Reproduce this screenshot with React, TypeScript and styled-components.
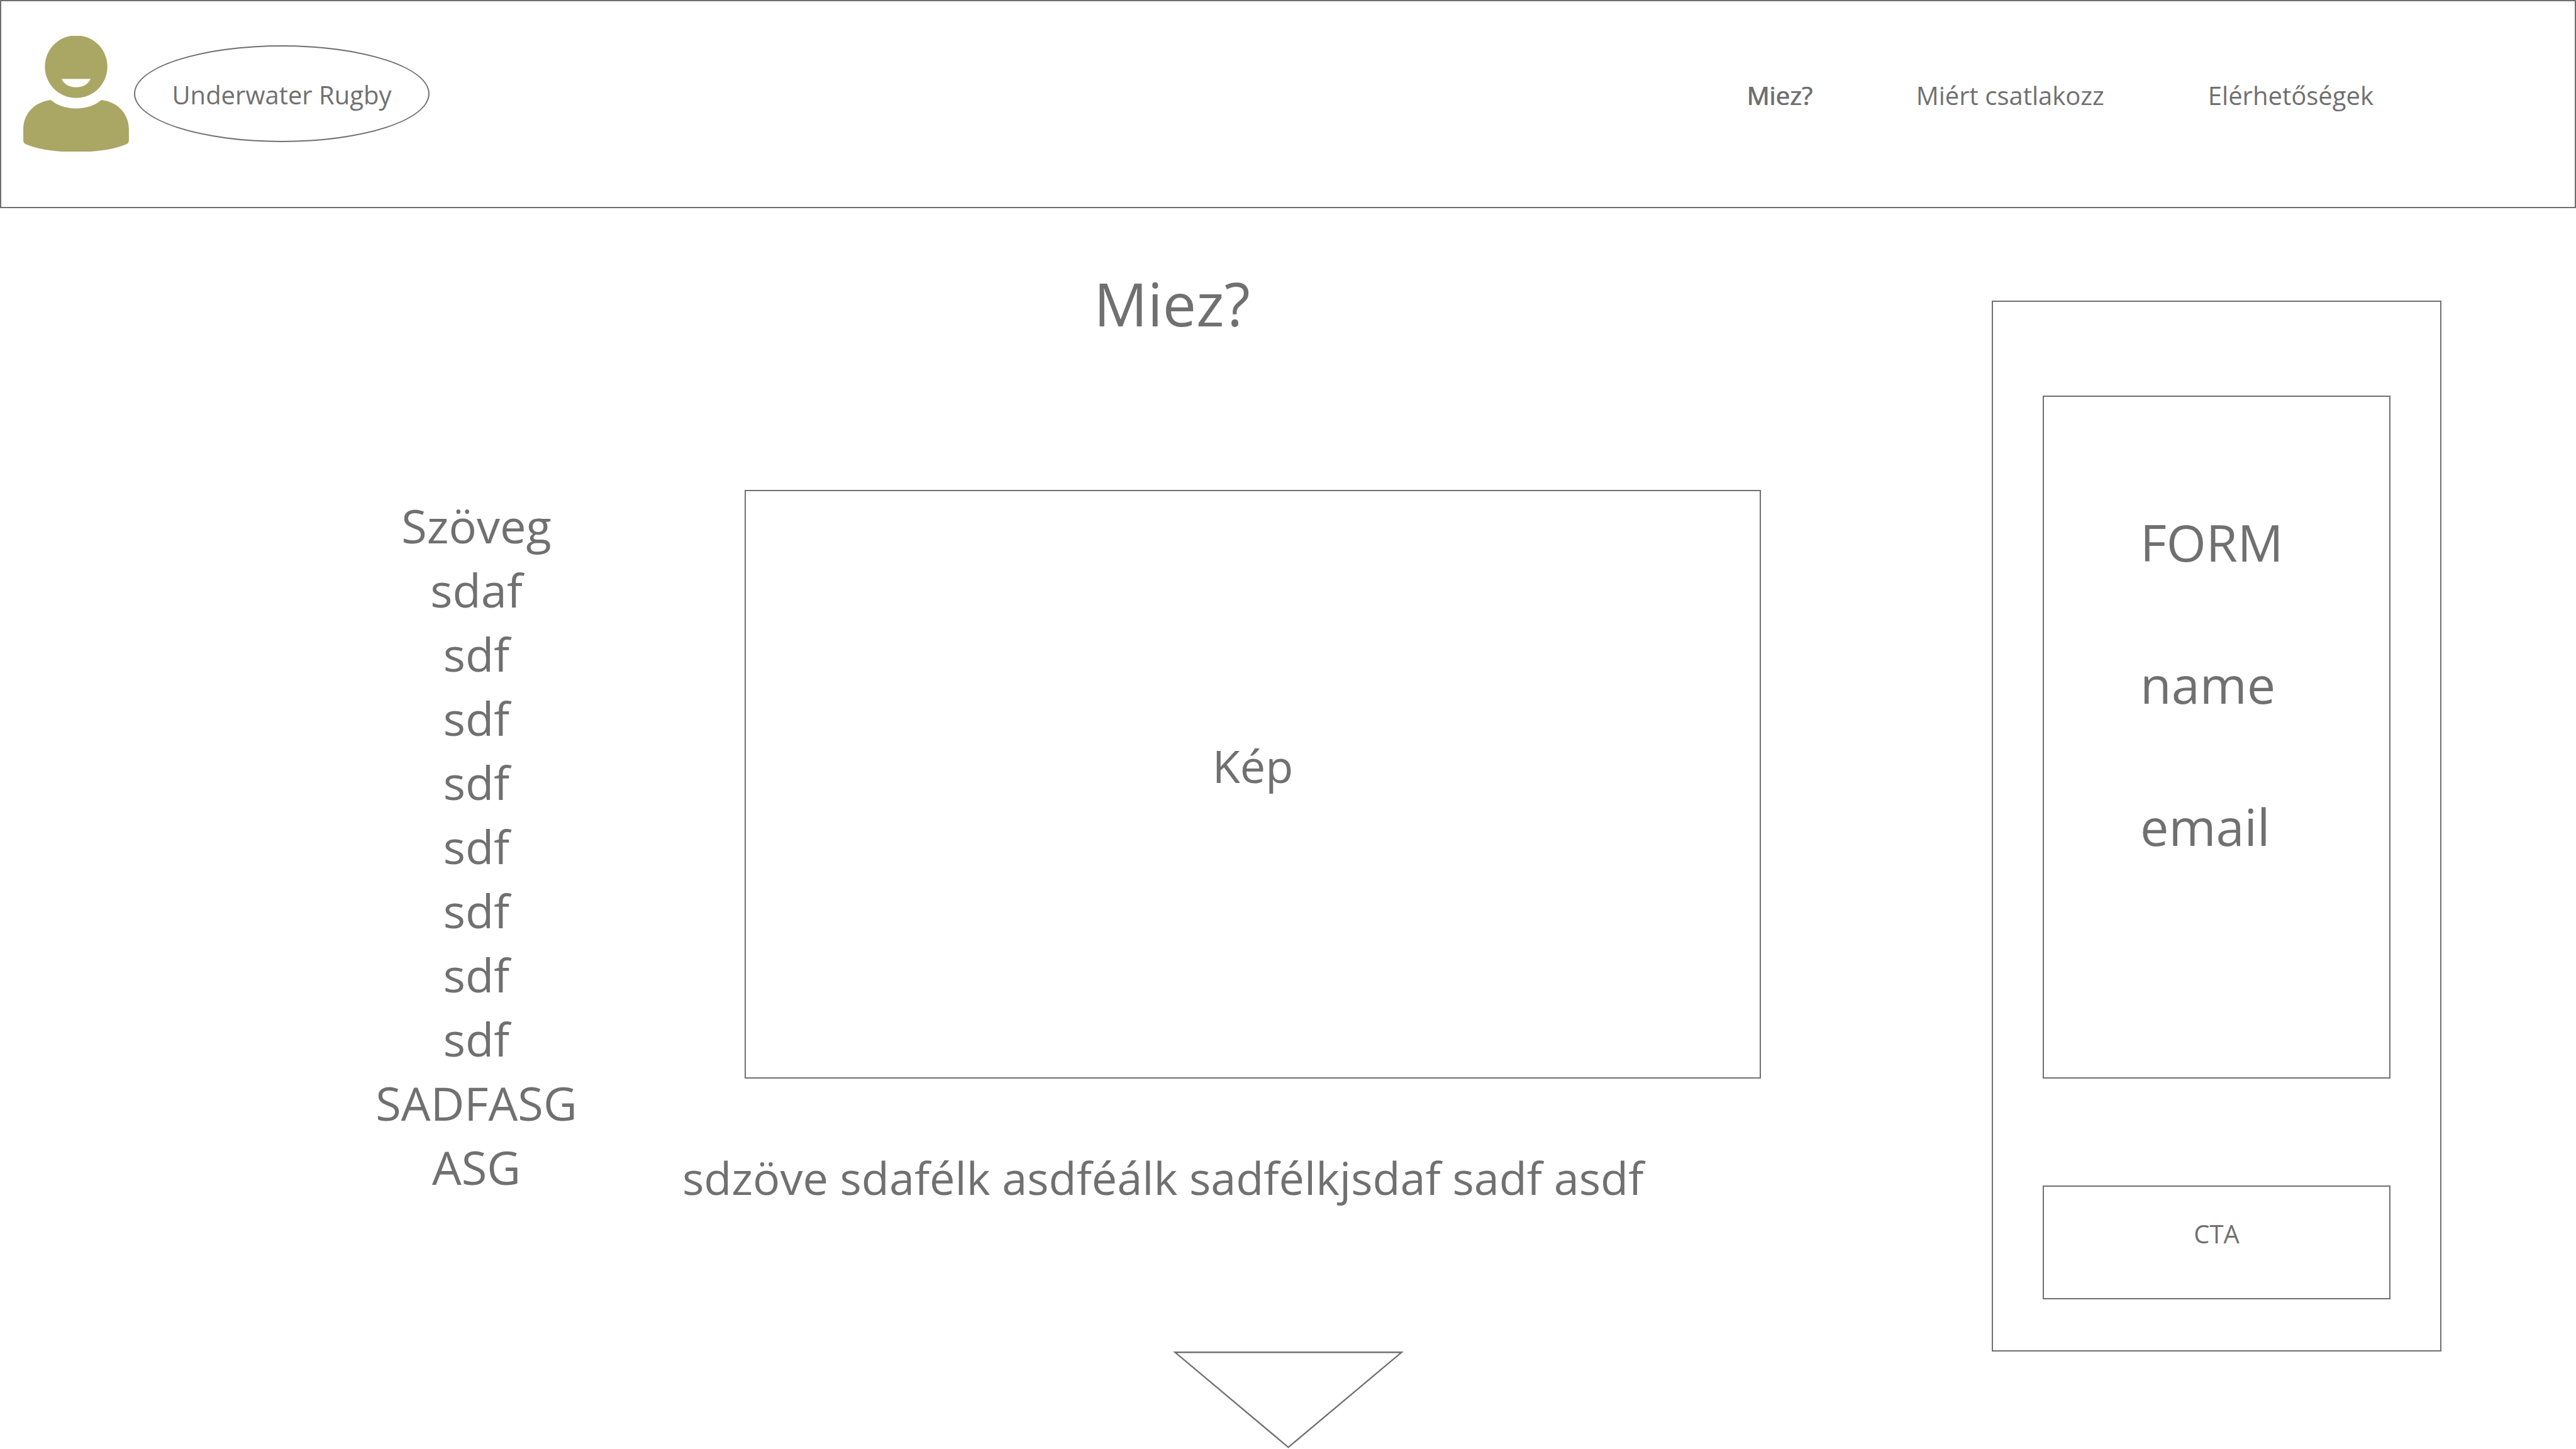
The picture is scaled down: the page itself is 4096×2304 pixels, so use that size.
import React from "react";
import styled, { createGlobalStyle, css } from "styled-components";

const ink = "#707070";
const line = `2px solid ${ink}`;
const olive = "#aaa664";

const GlobalStyle = createGlobalStyle`
  *, *::before, *::after { box-sizing: border-box; }
  body {
    margin: 0;
    background: #fff;
    color: ${ink};
    font-family: "Open Sans", "Noto Sans", sans-serif;
    font-size: 40px;
    line-height: 54px;
  }
`;

const Page = styled.div`
  display: flex;
  flex-direction: column;
`;

const Header = styled.header`
  display: flex;
  align-items: flex-start;
  gap: 8px;
  padding: 55px 320px 88px 35px;
  border: ${line};
`;

const Avatar = styled.svg`
  flex: none;
  width: 168px;
  height: 184px;
`;

const Brand = styled.a`
  display: flex;
  align-items: center;
  justify-content: center;
  width: 470px;
  height: 154px;
  margin-top: 15px;
  padding-top: 4px;
  border: ${line};
  border-radius: 50%;
  color: inherit;
  text-decoration: none;
  white-space: nowrap;
`;

const Nav = styled.nav`
  display: flex;
  gap: 165px;
  margin-left: auto;
  padding-top: 68px;
`;

const NavLink = styled.a<{ $active?: boolean }>`
  color: inherit;
  text-decoration: none;
  white-space: nowrap;
  ${(p) =>
    p.$active &&
    css`
      text-shadow: 1px 0 currentColor;
    `}
`;

const Main = styled.main`
  display: flex;
  align-items: flex-start;
  padding: 0 214px 0 560px;
`;

const Article = styled.article`
  flex: 1;
  min-width: 0;
  display: grid;
  grid-template-columns: 395px 130px 99px 1fr 367px;
  padding-top: 88px;
`;

const Title = styled.h1`
  grid-column: 1 / -1;
  margin: 0 0 234px;
  font-size: 95px;
  font-weight: 400;
  line-height: 126px;
  text-align: center;
`;

const TextList = styled.ul`
  grid-column: 1;
  grid-row: 2 / span 2;
  margin: 0;
  padding: 6px 0 0;
  list-style: none;
  font-size: 74px;
  line-height: 102px;
  text-align: center;
`;

const Picture = styled.div`
  grid-column: 4;
  grid-row: 2;
  display: flex;
  align-items: center;
  justify-content: center;
  height: 936px;
  padding-bottom: 60px;
  border: ${line};
  font-size: 72px;
  line-height: 98px;
`;

const Caption = styled.p`
  grid-column: 3 / -1;
  grid-row: 3;
  margin: 108px 0 0;
  font-size: 72px;
  line-height: 98px;
`;

const SignUp = styled.form`
  flex: none;
  display: flex;
  flex-direction: column;
  gap: 170px;
  width: 715px;
  margin-top: 147px;
  padding: 149px 79px 81px;
  border: ${line};
`;

const Fields = styled.div`
  display: flex;
  flex-direction: column;
  padding: 118px 40px 286px 153px;
  border: ${line};
  font-size: 81px;
  line-height: 226px;
`;

const FormTitle = styled.h2`
  margin: 0;
  font: inherit;
`;

const Field = styled.div`
  display: flex;
  gap: 16px;
`;

const FieldInput = styled.input`
  flex: 1;
  min-width: 0;
  padding: 0;
  border: 0;
  outline: 0;
  background: transparent;
  color: inherit;
  font-family: inherit;
  font-size: 40px;
`;

const Cta = styled.button`
  height: 181px;
  padding: 0 0 28px;
  border: ${line};
  background: transparent;
  color: inherit;
  font: inherit;
  cursor: pointer;
`;

const NextButton = styled.button`
  align-self: center;
  display: block;
  padding: 0;
  border: 0;
  background: transparent;
  cursor: pointer;
`;

const Triangle = styled.svg`
  display: block;
  width: 367px;
  height: 154px;
`;

const navItems = [
  { label: "Miez?", href: "#miez", active: true },
  { label: "Miért csatlakozz", href: "#miert", active: false },
  { label: "Elérhetőségek", href: "#elerhetosegek", active: false },
];

const lines = [
  "Szöveg",
  "sdaf",
  "sdf",
  "sdf",
  "sdf",
  "sdf",
  "sdf",
  "sdf",
  "sdf",
  "SADFASG",
  "ASG",
];

export default function App() {
  return (
    <Page>
      <GlobalStyle />
      <Header>
        <Avatar viewBox="0 0 218.5 239.5" fill={olive} aria-hidden="true">
          <path
            fillRule="evenodd"
            d="M109.3 -.9a64.7 64.7 0 1 1 0 129.4a64.7 64.7 0 1 1 0 -129.4zM79.3 89.3C84 100 95 106.5 109.3 106.5S134.6 100 139.3 89.3z"
          />
          <path d="M0 193.5C0 162 22 138 54 133Q57 132.2 59 134.5C72 144.5 88 150.3 109.3 150.3S146.5 144.5 159.5 134.5Q161.5 132.2 164.5 133C196.5 138 218.5 162 218.5 193.5V216Q218.5 221.5 214 224C190 235 150 240.5 109.3 240.5S28.5 235 4.5 224Q0 221.5 0 216z" />
        </Avatar>
        <Brand href="#top">Underwater Rugby</Brand>
        <Nav>
          {navItems.map((item) => (
            <NavLink key={item.href} href={item.href} $active={item.active}>
              {item.label}
            </NavLink>
          ))}
        </Nav>
      </Header>

      <Main>
        <Article id="miez">
          <Title>Miez?</Title>
          <TextList>
            {lines.map((text, i) => (
              <li key={i}>{text}</li>
            ))}
          </TextList>
          <Picture>Kép</Picture>
          <Caption>sdzöve sdafélk asdféálk sadfélkjsdaf sadf asdf</Caption>
        </Article>

        <SignUp onSubmit={(e) => e.preventDefault()}>
          <Fields>
            <FormTitle>FORM</FormTitle>
            <Field>
              <label htmlFor="name">name</label>
              <FieldInput id="name" type="text" />
            </Field>
            <Field>
              <label htmlFor="email">email</label>
              <FieldInput id="email" type="email" />
            </Field>
          </Fields>
          <Cta type="submit">CTA</Cta>
        </SignUp>
      </Main>

      <NextButton type="button" aria-label="Tovább">
        <Triangle viewBox="0 0 367 154" fill="none" stroke={ink} strokeWidth="2.4">
          <path d="M3.5 1.3H363.5L183.5 152.3z" />
        </Triangle>
      </NextButton>
    </Page>
  );
}
